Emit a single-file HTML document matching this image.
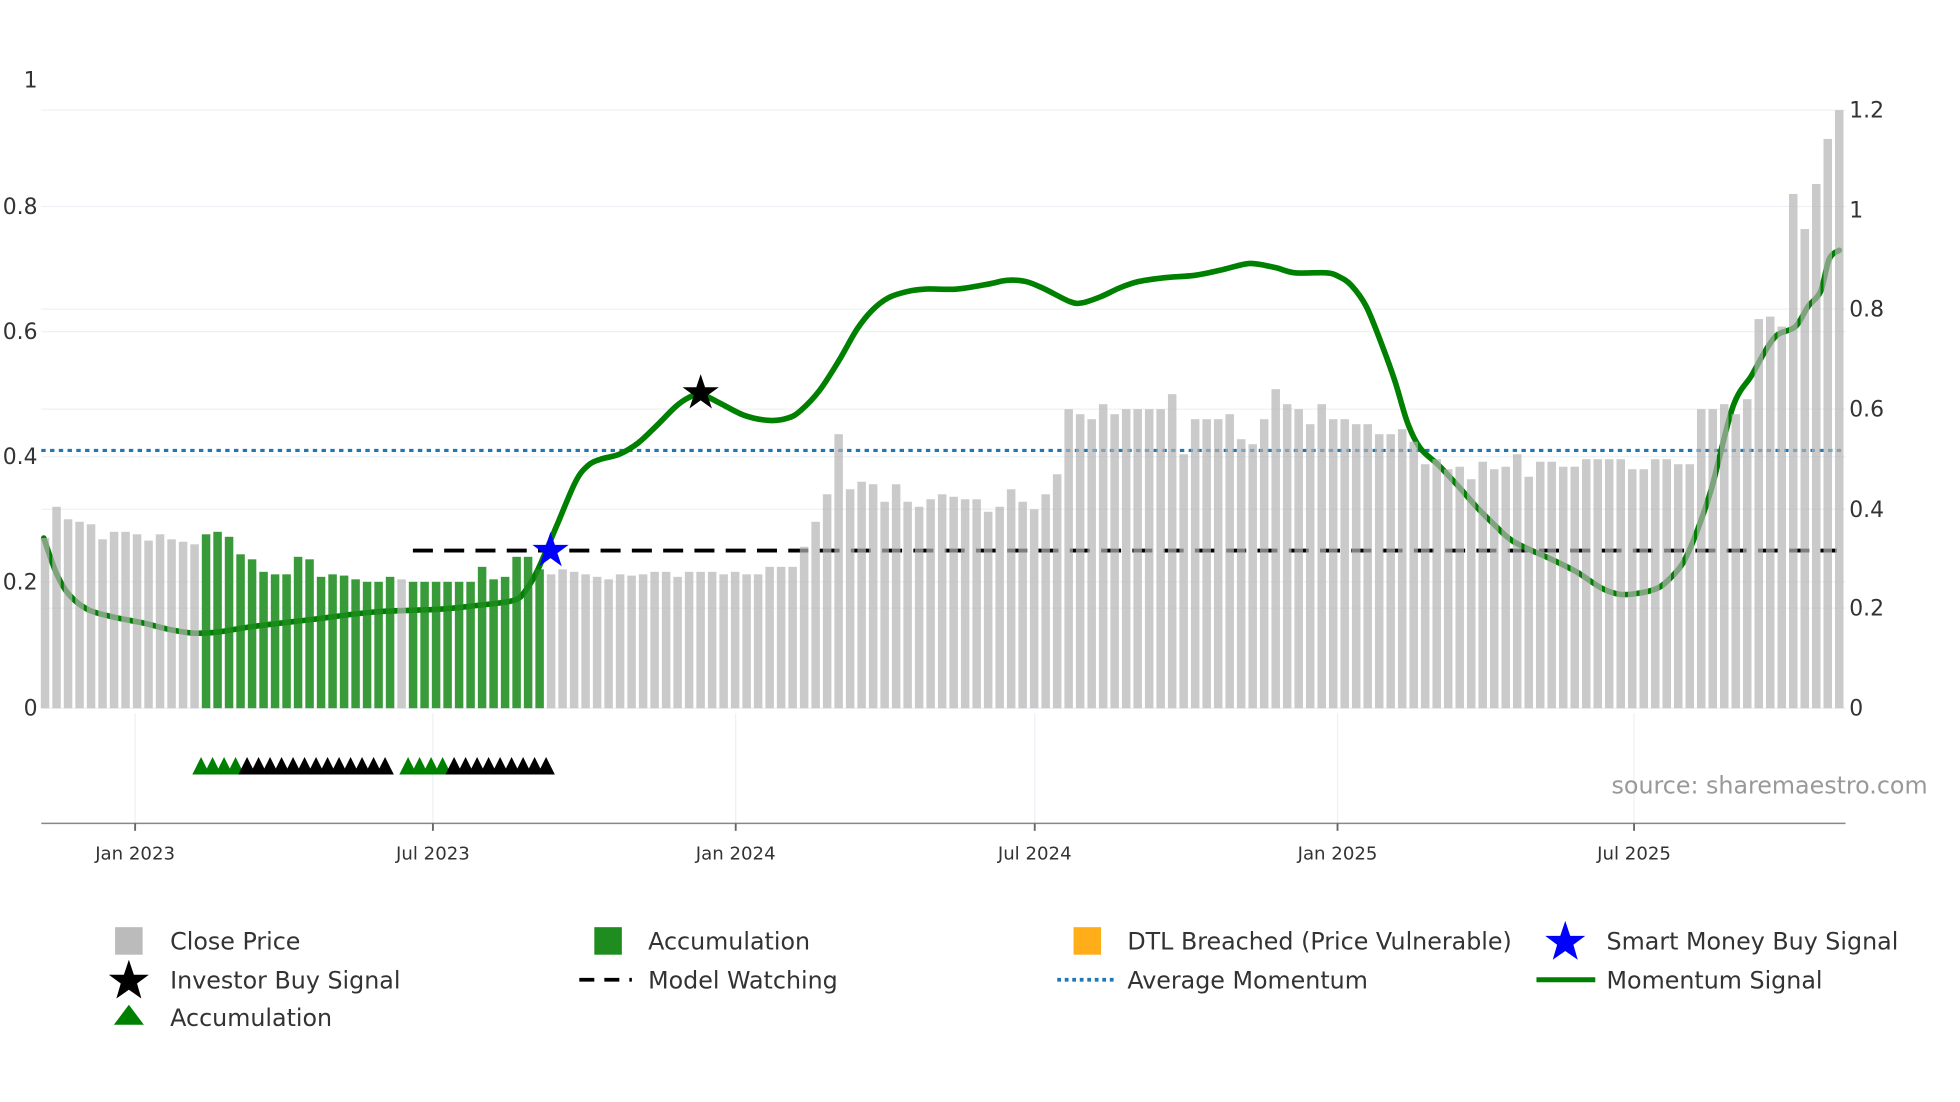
<!DOCTYPE html>
<html><head><meta charset="utf-8"><style>
html,body{margin:0;padding:0;background:#fff;width:1960px;height:1102px;overflow:hidden}
svg{display:block}
text{font-family:"DejaVu Sans","Liberation Sans",sans-serif;fill:#333}
</style></head><body>
<svg id="s" width="1960" height="1102" viewBox="0 0 1566.5 880.7" xmlns="http://www.w3.org/2000/svg">
<g stroke="#edf1f5" stroke-width="1">
<line x1="33" x2="1475" y1="88" y2="88"/><line x1="33" x2="1475" y1="165" y2="165"/><line x1="33" x2="1475" y1="247" y2="247"/><line x1="33" x2="1475" y1="265" y2="265"/><line x1="33" x2="1475" y1="327" y2="327"/><line x1="33" x2="1475" y1="365" y2="365"/><line x1="33" x2="1475" y1="407" y2="407"/><line x1="33" x2="1475" y1="465" y2="465"/><line x1="33" x2="1475" y1="486" y2="486"/><line x1="33" x2="1475" y1="566" y2="566"/>
<line x1="108" x2="108" y1="570" y2="658"/><line x1="346" x2="346" y1="570" y2="658"/><line x1="588" x2="588" y1="570" y2="658"/><line x1="827" x2="827" y1="570" y2="658"/><line x1="1069" x2="1069" y1="570" y2="658"/><line x1="1306" x2="1306" y1="570" y2="658"/>
</g>
<g font-size="17.5" text-anchor="end">
<text x="30" y="70">1</text><text x="30" y="171">0.8</text><text x="30" y="271">0.6</text><text x="30" y="371">0.4</text><text x="30" y="471">0.2</text><text x="30" y="572">0</text>
</g>
<g font-size="17.5">
<text x="1478" y="94">1.2</text><text x="1478" y="174">1</text><text x="1478" y="253">0.8</text><text x="1478" y="333">0.6</text><text x="1478" y="413">0.4</text><text x="1478" y="492">0.2</text><text x="1478" y="572">0</text>
</g>
<line x1="33" x2="1475" y1="360" y2="360" stroke="#1f77b4" stroke-width="2.5" stroke-dasharray="3.5,3.5"/>
<line x1="330" x2="1468" y1="440" y2="440" stroke="#000" stroke-width="3" stroke-dasharray="16,9"/>
<path id="mom" fill="none" stroke="#008000" stroke-width="4.5" stroke-linejoin="round" stroke-linecap="round"/>
<g id="bars"></g>
<g id="tri"></g>
<path d="M440,425 L443.5,435.5 L454.5,435.5 L445.5,442 L449,452.5 L440,446 L431,452.5 L434.5,442 L425.5,435.5 L436.5,435.5Z" fill="#0000ff"/>
<path d="M560,299 L563.5,309.5 L574.5,309.5 L565.5,316 L569,326.5 L560,320 L551,326.5 L554.5,316 L545.5,309.5 L556.5,309.5Z" fill="#000"/>
<line x1="33" x2="1475" y1="658" y2="658" stroke="#888" stroke-width="1.2"/>
<g stroke="#666" stroke-width="1.5">
<line x1="108" x2="108" y1="658" y2="664"/><line x1="346" x2="346" y1="658" y2="664"/><line x1="588" x2="588" y1="658" y2="664"/><line x1="827" x2="827" y1="658" y2="664"/><line x1="1069" x2="1069" y1="658" y2="664"/><line x1="1306" x2="1306" y1="658" y2="664"/>
</g>
<g font-size="14.5" text-anchor="middle">
<text x="108" y="687">Jan 2023</text><text x="346" y="687">Jul 2023</text><text x="588" y="687">Jan 2024</text><text x="827" y="687">Jul 2024</text><text x="1069" y="687">Jan 2025</text><text x="1306" y="687">Jul 2025</text>
</g>
<text x="1288" y="634" font-size="19" style="fill:#999">source: sharemaestro.com</text>
<g font-size="19">
<rect x="92" y="741" width="22" height="22" fill="#bbb"/><text x="136" y="759">Close Price</text>
<rect x="475" y="741" width="22" height="22" fill="#1e8c1e"/><text x="518" y="759">Accumulation</text>
<rect x="858" y="741" width="22" height="22" fill="#ffae1a"/><text x="901" y="759">DTL Breached (Price Vulnerable)</text>
<path d="M1251,736 L1255,748 L1267,748 L1257.5,755 L1261,767 L1251,760 L1241,767 L1244.5,755 L1235,748 L1247,748Z" fill="#0000ff"/><text x="1284" y="759">Smart Money Buy Signal</text>
<path d="M103,767 L107,779 L119,779 L109.5,786 L113,798 L103,791 L93,798 L96.5,786 L87,779 L99,779Z" fill="#000"/><text x="136" y="790">Investor Buy Signal</text>
<line x1="463" x2="505" y1="783" y2="783" stroke="#000" stroke-width="3" stroke-dasharray="12,8"/><text x="518" y="790">Model Watching</text>
<line x1="845" x2="890" y1="783" y2="783" stroke="#1f77b4" stroke-width="3" stroke-dasharray="3,3"/><text x="901" y="790">Average Momentum</text>
<line x1="1228" x2="1275" y1="783" y2="783" stroke="#008000" stroke-width="4"/><text x="1284" y="790">Momentum Signal</text>
<path d="M91,819 L103,803 L115,819Z" fill="#008000"/><text x="136" y="820">Accumulation</text>
</g>
</svg>
<script>
var pts=[[35,430],[45,458],[55,475],[70,487],[90,493],[115,498],[135,503],[155,506],[175,505],[200,501],[250,495],[300,489],[350,487],[380,484],[410,480],[420,472],[430,455],[445,420],[460,385],[470,372],[480,367],[495,363],[510,354],[525,340],[540,325],[550,318],[560,315],[575,322],[595,332],[615,336],[630,334],[640,328],[655,312],[670,289],[685,263],[697,248],[710,238],[725,233],[740,231],[765,231],[790,227],[805,224],[820,225],[835,231],[855,241],[865,242],[880,237],[895,230],[910,225],[930,222],[955,220],[975,216],[995,211],[1005,211],[1020,214],[1035,218],[1060,218],[1070,221],[1080,228],[1092,245],[1105,277],[1115,305],[1125,338],[1135,358],[1150,372],[1165,388],[1180,405],[1195,420],[1210,433],[1240,447],[1260,457],[1280,470],[1295,475],[1310,474],[1325,470],[1335,462],[1345,450],[1355,428],[1368,390],[1385,325],[1400,300],[1410,282],[1420,268],[1435,261],[1445,245],[1455,233],[1462,207],[1470,200]];
var d="M"+pts[0][0]+","+pts[0][1];
for(var i=1;i<pts.length;i++){var p0=pts[i-1],p1=pts[i],pm=pts[i-2]||p0,p2=pts[i+1]||p1;
var c1x=p0[0]+(p1[0]-pm[0])/6,c1y=p0[1]+(p1[1]-pm[1])/6,c2x=p1[0]-(p2[0]-p0[0])/6,c2y=p1[1]-(p2[1]-p0[1])/6;
d+=" C"+c1x+","+c1y+" "+c2x+","+c2y+" "+p1[0]+","+p1[1];}
document.getElementById("mom").setAttribute("d",d);
var h=[430,405,415,417,419,431,425,425,427,432,427,431,433,435,427,425,429,443,447,457,459,459,445,447,461,459,460,463,465,465,461,463,465,465,465,465,465,465,453,463,461,445,445,455,459,455,457,459,461,463,459,460,459,457,457,461,457,457,457,459,457,459,459,453,453,453,437,417,395,347,391,385,387,401,387,401,405,399,395,397,399,399,409,405,391,401,407,395,379,327,331,335,323,331,327,327,327,327,315,363,335,335,335,331,351,355,335,311,323,327,339,323,335,335,339,339,347,347,343,353,371,367,375,373,383,369,375,373,363,381,369,369,373,373,367,367,367,367,375,375,367,367,371,371,327,327,323,331,319,255,253,261,155,183,147,111,88];
var ns="http://www.w3.org/2000/svg",g=document.getElementById("bars"),n=h.length,step=(1470-36)/(n-1);
for(var i=0;i<n;i++){var x=36+i*step,r=document.createElementNS(ns,"rect");
var green=(i>=14&&i<=30)||(i>=32&&i<=43);
r.setAttribute("x",x-3.4);r.setAttribute("y",h[i]);r.setAttribute("width",6.8);r.setAttribute("height",566-h[i]);
r.setAttribute("fill",green?"#1e8c1e":"#b4b4b4");r.setAttribute("fill-opacity",green?"0.88":"0.7");g.appendChild(r);}
var t=document.getElementById("tri");
for(var i=14;i<=44;i++){if(i==31)continue;var x=36+i*step-4,c=document.createElementNS(ns,"path");
var gr=(i<=17)||(i>=32&&i<=35);
c.setAttribute("d","M"+(x-7)+",619 L"+x+",605 L"+(x+7)+",619Z");c.setAttribute("fill",gr?"#008000":"#000");t.appendChild(c);}
</script>
</body></html>
